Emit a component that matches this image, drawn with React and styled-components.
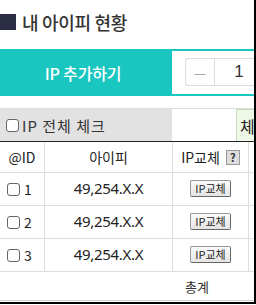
import styled, { createGlobalStyle } from "styled-components";

const GlobalStyle = createGlobalStyle`
    body {
        margin: 0;
        background: #fff;
        font-family: "Noto Sans CJK KR", "Noto Sans", sans-serif;
        color: #333;
    }
`

const rows = [
    { id: 1, ip: "49,254.X.X" },
    { id: 2, ip: "49,254.X.X" },
    { id: 3, ip: "49,254.X.X" },
];

const App = () => {
    return (
        <>
            <GlobalStyle />
            <Frame>
                <Title>
                    <TitleMark />
                    <span>내 아이피 현황</span>
                </Title>

                <AddBar>
                    <AddButton>IP 추가하기</AddButton>
                    <StepperArea>
                        <Stepper>
                            <StepButton>—</StepButton>
                            <StepValue>1</StepValue>
                        </Stepper>
                    </StepperArea>
                </AddBar>

                <CheckRow>
                    <CheckAll>
                        <Check type="checkbox" />
                        <span>IP 전체 체크</span>
                    </CheckAll>
                    <CheckActions>
                        <GreenButton>체</GreenButton>
                    </CheckActions>
                </CheckRow>

                <Table>
                    <HeadCell>@ID</HeadCell>
                    <HeadCell>아이피</HeadCell>
                    <HeadCell>
                        IP교체 <Help>?</Help>
                    </HeadCell>
                    <HeadCell $last />

                    {rows.map((row) => (
                        <Row key={row.id}>
                            <IdCell>
                                <Check type="checkbox" />
                                <span>{row.id}</span>
                            </IdCell>
                            <IpCell>{row.ip}</IpCell>
                            <Cell>
                                <SwapButton>IP교체</SwapButton>
                            </Cell>
                            <Cell $last />
                        </Row>
                    ))}

                    <TotalCell>총계</TotalCell>
                </Table>
            </Frame>
        </>
    )
}

const Frame = styled.div`
    width: 256px;
    height: 304px;
    box-sizing: border-box;
    border-right: 2px solid #000;
    border-bottom: 2px solid #000;
    overflow: hidden;
`

const Title = styled.div`
    display: flex;
    align-items: center;
    gap: 6px;
    padding-top: 13px;
    height: 18px;
    font-size: 18px;
    line-height: 18px;
    font-weight: 500;
    color: #333;
    letter-spacing: -0.3px;
`

const TitleMark = styled.i`
    display: block;
    width: 16px;
    height: 16px;
    background: #2b2d45;
`

const AddBar = styled.div`
    display: flex;
    margin-top: 18px;
    width: 254px;
    height: 47px;
    box-sizing: border-box;
    border: 2px solid #19c7c0;
    border-left: none;
    border-right: none;
`

const AddButton = styled.div`
    width: 172px;
    flex-shrink: 0;
    display: flex;
    align-items: center;
    justify-content: center;
    background: #19c7c0;
    color: #fff;
    font-size: 16px;
    font-weight: 500;
    letter-spacing: -0.2px;
    padding-right: 6px;
    box-sizing: border-box;
`

const StepperArea = styled.div`
    flex: 1;
    display: flex;
    align-items: center;
    padding-left: 13px;
    padding-bottom: 2px;
    overflow: hidden;
`

const Stepper = styled.div`
    display: flex;
    flex-shrink: 0;
    height: 28px;
    box-sizing: border-box;
    border: 1px solid #ddd;
    border-right: none;
    border-radius: 3px 0 0 3px;
`

const StepButton = styled.div`
    width: 28px;
    display: flex;
    align-items: center;
    justify-content: center;
    color: #aaa;
    font-size: 14px;
    border-right: 1px solid #ddd;
`

const StepValue = styled.div`
    width: 48px;
    display: flex;
    align-items: center;
    justify-content: center;
    font-size: 17px;
    color: #333;
    font-family: "Liberation Sans", sans-serif;
`

const CheckRow = styled.div`
    display: flex;
    margin-top: 12px;
    height: 33px;
    box-sizing: border-box;
    border-top: 1px solid #ddd;
`

const CheckAll = styled.label`
    width: 172px;
    flex-shrink: 0;
    display: flex;
    align-items: center;
    gap: 3px;
    padding-left: 6px;
    box-sizing: border-box;
    background: #e2e2e2;
    font-size: 15px;
    letter-spacing: 1px;
    color: #333;
    white-space: nowrap;
`

const CheckActions = styled.div`
    flex: 1;
    display: flex;
    align-items: stretch;
    padding-left: 64px;
`

const GreenButton = styled.div`
    flex: 1;
    display: flex;
    align-items: center;
    padding-left: 3px;
    white-space: nowrap;
    background: #eef8e6;
    border: 1px solid #c9d9bd;
    border-right: none;
    border-bottom: none;
    font-size: 16px;
    color: #222;
`

const Check = styled.input`
    appearance: none;
    flex-shrink: 0;
    margin: 0;
    width: 13px;
    height: 13px;
    box-sizing: border-box;
    border: 1px solid #666;
    border-radius: 3px;
    background: #fff;
`

const Table = styled.div`
    display: grid;
    grid-template-columns: 45px 128px 76px 1fr;
    border-top: 1px solid #222;
    border-bottom: 1px solid #ccc;
    font-size: 13px;
    color: #222;
`

const Row = styled.div`
    display: contents;
`

const Cell = styled.div`
    height: 33px;
    box-sizing: border-box;
    display: flex;
    align-items: center;
    justify-content: center;
    border-bottom: 1px solid #ddd;
    border-right: ${(p) => (p.$last ? "none" : "1px solid #ddd")};
`

const HeadCell = styled(Cell)`
    height: 31px;
    gap: 6px;
    font-size: 14px;
    color: #222;
`

const IdCell = styled(Cell)`
    justify-content: flex-start;
    gap: 4px;
    padding-left: 7px;
    font-size: 14px;
`

const IpCell = styled(Cell)`
    font-size: 15px;
    font-family: "Noto Sans", sans-serif;
    color: #222;
    padding-bottom: 2px;
    letter-spacing: -0.3px;
`

const Help = styled.span`
    display: inline-flex;
    align-items: center;
    justify-content: center;
    width: 12px;
    height: 13px;
    background: #ddd;
    border: 1px solid #999;
    font-size: 11px;
    font-weight: bold;
    color: #333;
`

const SwapButton = styled.button`
    width: 41px;
    height: 17px;
    padding: 0;
    margin-bottom: 2px;
    background: linear-gradient(#fbfbfb, #e4e4e4);
    border: 1px solid #999;
    border-right-color: #666;
    border-bottom-color: #666;
    border-radius: 2px;
    font-family: "Noto Sans CJK KR", sans-serif;
    font-size: 11px;
    line-height: 15px;
    color: #222;
`

const TotalCell = styled.div`
    grid-column: 3 / 5;
    height: 28px;
    display: flex;
    align-items: center;
    padding-left: 12px;
    font-size: 13px;
    color: #333;
`

export default App
